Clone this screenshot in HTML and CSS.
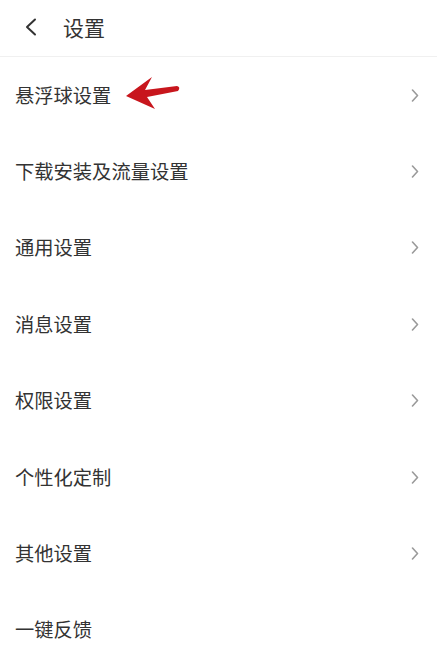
FILE: index.html
```html
<!DOCTYPE html>
<html lang="zh-CN">
<head>
<meta charset="utf-8">
<title>设置</title>
<link rel="stylesheet" href="styles.css">
</head>
<body>
<div class="page">
  <header class="topbar">
    <svg class="back" width="14" height="18" viewBox="0 0 14 18"><path d="M11 1.5 L3 9 L11 16.5" fill="none" stroke="#333" stroke-width="2" stroke-linecap="round" stroke-linejoin="round"/></svg>
    <h1 class="title">设置</h1>
  </header>
  <ul class="list">
    <li class="row">
      <span class="label">悬浮球设置</span>
      <svg class="mark" width="60" height="36" viewBox="0 0 60 36"><path d="M2 21 L28 2 L21 15 L53 11 Q57 12 54 16 L23 22 L31 34 Z" fill="#c8161d"/></svg>
      <svg class="chev" width="8" height="13" viewBox="0 0 8 13"><path d="M1.5 1 L6.5 6.5 L1.5 12" fill="none" stroke="#9a9a9a" stroke-width="1.6" stroke-linecap="round" stroke-linejoin="round"/></svg>
    </li>
    <li class="row">
      <span class="label">下载安装及流量设置</span>
      <svg class="chev" width="8" height="13" viewBox="0 0 8 13"><path d="M1.5 1 L6.5 6.5 L1.5 12" fill="none" stroke="#9a9a9a" stroke-width="1.6" stroke-linecap="round" stroke-linejoin="round"/></svg>
    </li>
    <li class="row">
      <span class="label">通用设置</span>
      <svg class="chev" width="8" height="13" viewBox="0 0 8 13"><path d="M1.5 1 L6.5 6.5 L1.5 12" fill="none" stroke="#9a9a9a" stroke-width="1.6" stroke-linecap="round" stroke-linejoin="round"/></svg>
    </li>
    <li class="row">
      <span class="label">消息设置</span>
      <svg class="chev" width="8" height="13" viewBox="0 0 8 13"><path d="M1.5 1 L6.5 6.5 L1.5 12" fill="none" stroke="#9a9a9a" stroke-width="1.6" stroke-linecap="round" stroke-linejoin="round"/></svg>
    </li>
    <li class="row">
      <span class="label">权限设置</span>
      <svg class="chev" width="8" height="13" viewBox="0 0 8 13"><path d="M1.5 1 L6.5 6.5 L1.5 12" fill="none" stroke="#9a9a9a" stroke-width="1.6" stroke-linecap="round" stroke-linejoin="round"/></svg>
    </li>
    <li class="row">
      <span class="label">个性化定制</span>
      <svg class="chev" width="8" height="13" viewBox="0 0 8 13"><path d="M1.5 1 L6.5 6.5 L1.5 12" fill="none" stroke="#9a9a9a" stroke-width="1.6" stroke-linecap="round" stroke-linejoin="round"/></svg>
    </li>
    <li class="row">
      <span class="label">其他设置</span>
      <svg class="chev" width="8" height="13" viewBox="0 0 8 13"><path d="M1.5 1 L6.5 6.5 L1.5 12" fill="none" stroke="#9a9a9a" stroke-width="1.6" stroke-linecap="round" stroke-linejoin="round"/></svg>
    </li>
    <li class="row">
      <span class="label">一键反馈</span>
    </li>
  </ul>
</div>
</body>
</html>
```

FILE: styles.css
```css
* { box-sizing: border-box; }
html, body {
  margin: 0;
  padding: 0;
  background: #ffffff;
}
body {
  font-family: "Noto Sans CJK SC", "Noto Sans", sans-serif;
  color: #333333;
  overflow: hidden;
}
.page {
  width: 437px;
  height: 648px;
  overflow: hidden;
}
.topbar {
  height: 57px;
  display: flex;
  align-items: center;
  padding: 0 0 2px 24px;
  border-bottom: 1px solid #f0f0f0;
}
.back {
  display: block;
  margin-right: 25px;
}
.title {
  margin: 0;
  font-size: 21px;
  font-weight: 400;
  color: #333333;
  line-height: 1;
}
.list {
  list-style: none;
  margin: 0;
  padding: 0;
}
.row {
  height: 76.4px;
  display: flex;
  align-items: center;
  padding: 0 18px 0 15px;
}
.label {
  font-size: 19.3px;
  line-height: 1;
  color: #333333;
}
.mark {
  display: block;
  margin-left: 13px;
  margin-top: -4px;
}
.chev {
  display: block;
  margin-left: auto;
}
```
